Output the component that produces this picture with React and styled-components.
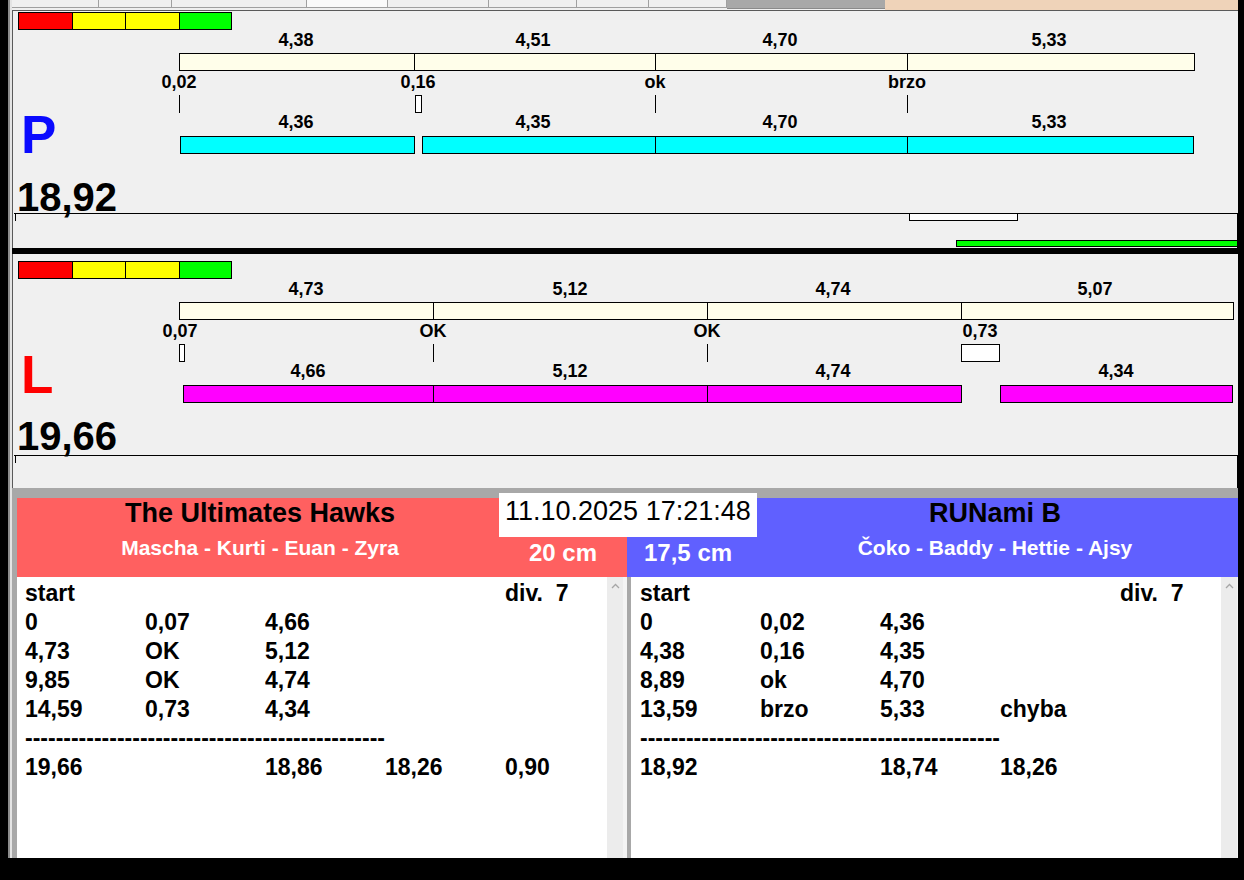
import React from 'react';
import styled, { createGlobalStyle } from 'styled-components';

const GlobalStyle = createGlobalStyle`
  html, body { margin: 0; padding: 0; background: #000; }
  body { font-family: "Liberation Sans", Arial, sans-serif; }
  * { box-sizing: border-box; }
`;

const ORIGIN = 179; // timeline x origin on the page
const BOX_ORIGIN = 14;

const Frame = styled.div`
  width: 1244px;
  height: 880px;
  padding: 0 6px 22px 8px;
  background: #000;
  overflow: hidden;
`;

const Window = styled.div`
  height: 858px;
  display: flex;
  flex-direction: column;
  border-left: 2px solid #8c8c8c;
  padding-left: 2px;
  background: #e4e4e4;
  overflow: hidden;
`;

const TabStrip = styled.div`
  height: 10px;
  display: flex;
  background: #f0f0f0;
`;

const Tab = styled.div`
  width: ${p => p.$w}px;
  height: 8px;
  background: ${p => (p.$active ? '#fafafa' : '#f0f0f0')};
  border-right: 1px solid #a0a0a0;
  border-bottom: 1px solid #a0a0a0;
`;

const TabFill = styled.div`
  width: 158px;
  height: 9px;
  background: #a8a8a8;
  border-bottom: 1px solid #8a8a8a;
`;

const TabPeach = styled.div`
  flex: 1;
  height: 10px;
  background: #efd3b9;
`;

const Panel = styled.section`
  height: ${p => p.$h}px;
  background: #f0f0f0;
  border-left: 1px solid #5a5a5a;
  border-top: ${p => (p.$top ? '1px solid #5a5a5a' : 'none')};
  display: flex;
  flex-direction: column;
`;

const PanelSeparator = styled.div`
  height: 6px;
  background: #000;
`;

const GrayBand = styled.div`
  height: 10px;
  background: #a8a8a8;
`;

const Indicator = styled.div`
  margin: ${p => p.$mt}px 0 0 5px;
  width: 214px;
  height: 18px;
  display: grid;
  grid-template-columns: 53px 52px 53px 1fr;
  gap: 1px;
  background: #000;
  border: 1px solid #000;
`;

const IndicatorCell = styled.div`
  background: ${p => p.$c};
`;

const Body = styled.div`
  height: 124px;
  display: grid;
  grid-template-columns: 166px 1fr;
`;

const Letter = styled.div`
  font-size: 53px;
  font-weight: 700;
  line-height: 52px;
  padding: ${p => p.$pt}px 0 0 8px;
  color: ${p => p.$c};
`;

const Timeline = styled.div`
  display: flex;
  flex-direction: column;
  min-width: 0;
`;

const Row = styled.div`
  position: relative;
  height: ${p => p.$h}px;
`;

const ValueText = styled.span`
  position: absolute;
  top: ${p => p.$top || 0}px;
  transform: translateX(-50%);
  font-size: 18px;
  font-weight: 700;
  line-height: 20px;
  color: #000;
  white-space: nowrap;
`;

const Segment = styled.div`
  position: absolute;
  top: 0;
  height: 18px;
  border: 1px solid #000;
  background: ${p => p.$c};
`;

const TickLine = styled.div`
  position: absolute;
  top: 0;
  width: 1px;
  height: 18px;
  background: #000;
`;

const TickBox = styled.div`
  position: absolute;
  top: 0;
  height: 18px;
  border: 1px solid #000;
  background: #fff;
`;

const Total = styled.div`
  height: 32px;
  margin-top: ${p => p.$mt}px;
  margin-bottom: ${p => p.$mb || 0}px;
  padding-left: 4px;
  font-size: 40px;
  font-weight: 700;
  line-height: 32px;
  color: #000;
`;

const FaultBox = styled.div`
  position: relative;
  flex: 1;
  margin-left: 1px;
  border-top: 1px solid #000;
  border-right: 1px solid #000;
`;

const FaultTick = styled.div`
  position: absolute;
  left: 1px;
  top: 0;
  width: 1px;
  height: 7px;
  background: #000;
`;

const FaultMark = styled.div`
  position: absolute;
  height: ${p => p.$h}px;
  border: 1px solid #000;
  background: ${p => p.$c};
`;

const Lower = styled.div`
  position: relative;
  height: 360px;
  display: grid;
  grid-template-columns: 610px minmax(0, 1fr);
  padding-left: 5px;
  background: #a8a8a8;
`;

const TeamColumn = styled.div`
  display: flex;
  flex-direction: column;
  min-width: 0;
`;

const Header = styled.div`
  height: 79px;
  display: grid;
  grid-template-columns: ${p => (p.$side === 'left' ? '486px minmax(0, 1fr)' : '125px minmax(0, 1fr)')};
  background: ${p => p.$bg};
`;

const TitleBlock = styled.div`
  display: flex;
  flex-direction: column;
  align-items: center;
  min-width: 0;
`;

const TeamName = styled.div`
  font-size: 27px;
  font-weight: 700;
  line-height: 30px;
  color: #000;
  white-space: nowrap;
`;

const Members = styled.div`
  margin-top: 8px;
  font-size: 21px;
  font-weight: 700;
  line-height: 24px;
  color: #fff;
  white-space: nowrap;
`;

const Distance = styled.div`
  padding: 41px 0 0 ${p => p.$pl}px;
  font-size: 24px;
  font-weight: 700;
  line-height: 28px;
  color: #fff;
  white-space: nowrap;
`;

const DateBox = styled.div`
  position: absolute;
  left: 487px;
  top: -5px;
  width: 258px;
  height: 44px;
  padding: 0 0 8px 6px;
  background: #fff;
  font-size: 27px;
  line-height: 36px;
  color: #000;
  white-space: nowrap;
`;

const Pane = styled.div`
  flex: 1;
  display: flex;
  min-width: 0;
  background: #f4f4f4;
  border-left: ${p => (p.$divider ? '4px solid #a8a8a8' : 'none')};
  padding-right: ${p => p.$pr}px;
`;

const List = styled.div`
  flex: 1;
  min-width: 0;
  overflow: hidden;
  background: #fff;
  padding: 2px 0 0 ${p => p.$pl}px;
`;

const ListRow = styled.div`
  display: grid;
  grid-template-columns: repeat(5, 120px);
  height: 29px;
  font-size: 23px;
  font-weight: 700;
  line-height: 29px;
  color: #000;
  white-space: pre;
`;

const DashCell = styled.span`
  grid-column: 1 / -1;
  overflow: hidden;
`;

const Scrollbar = styled.div`
  flex: none;
  width: 16px;
  background: #ececec;
  display: flex;
  justify-content: center;
  align-items: flex-start;
  padding-top: 6px;
`;

const P_DATA = {
  top: [['4,38', 296], ['4,51', 533], ['4,70', 780], ['5,33', 1049]],
  bar1: [[179, 414], [414, 655], [655, 907], [907, 1194]],
  labels: [['0,02', 179], ['0,16', 418], ['ok', 655], ['brzo', 907]],
  ticks: [{ x: 179 }, { x: 415, w: 7 }, { x: 655 }, { x: 907 }],
  bottom: [['4,36', 296], ['4,35', 533], ['4,70', 780], ['5,33', 1049]],
  bar2: [[180, 414], [422, 655], [655, 907], [907, 1193]],
};

const L_DATA = {
  top: [['4,73', 306], ['5,12', 570], ['4,74', 833], ['5,07', 1095]],
  bar1: [[179, 433], [433, 707], [707, 961], [961, 1233]],
  labels: [['0,07', 180], ['OK', 433], ['OK', 707], ['0,73', 980]],
  ticks: [{ x: 179, w: 6 }, { x: 433 }, { x: 707 }, { x: 961, w: 39 }],
  bottom: [['4,66', 308], ['5,12', 570], ['4,74', 833], ['4,34', 1116]],
  bar2: [[183, 433], [433, 707], [707, 961], [1000, 1232]],
};

const Values = ({ items, top }) =>
  items.map(([t, x], i) => (
    <ValueText key={i} $top={top} style={{ left: x - ORIGIN }}>{t}</ValueText>
  ));

const Bars = ({ segs, color }) =>
  segs.map(([a, b], i) => (
    <Segment key={i} $c={color} style={{ left: a - ORIGIN, width: b - a + 1 }} />
  ));

const Ticks = ({ items }) =>
  items.map((t, i) =>
    t.w ? (
      <TickBox key={i} style={{ left: t.x - ORIGIN, width: t.w }} />
    ) : (
      <TickLine key={i} style={{ left: t.x - ORIGIN }} />
    )
  );

const TrackPanel = ({ h, top, indMt, letter, letterColor, letterPt, data, barColor, total, totalMt, totalMb, marks }) => (
  <Panel $h={h} $top={top}>
    <Indicator $mt={indMt}>
      <IndicatorCell $c="#ff0000" />
      <IndicatorCell $c="#ffff00" />
      <IndicatorCell $c="#ffff00" />
      <IndicatorCell $c="#00ff00" />
    </Indicator>
    <Body>
      <Letter $c={letterColor} $pt={letterPt}>{letter}</Letter>
      <Timeline>
        <Row $h={23}><Values items={data.top} /></Row>
        <Row $h={18}><Bars segs={data.bar1} color="#fffeea" /></Row>
        <Row $h={24}><Values items={data.labels} top={1} /></Row>
        <Row $h={18}><Ticks items={data.ticks} /></Row>
        <Row $h={23}><Values items={data.bottom} top={-1} /></Row>
        <Row $h={18}><Bars segs={data.bar2} color={barColor} /></Row>
      </Timeline>
    </Body>
    <Total $mt={totalMt} $mb={totalMb}>{total}</Total>
    <FaultBox>
      <FaultTick />
      {marks.map((m, i) => (
        <FaultMark
          key={i}
          $c={m.c}
          $h={m.h}
          style={{ left: m.a - BOX_ORIGIN, width: m.b - m.a + 1, top: m.y }}
        />
      ))}
    </FaultBox>
  </Panel>
);

const DASHES = '-'.repeat(47);

const LEFT_ROWS = [
  ['start', '', '', '', 'div.  7'],
  ['0', '0,07', '4,66', '', ''],
  ['4,73', 'OK', '5,12', '', ''],
  ['9,85', 'OK', '4,74', '', ''],
  ['14,59', '0,73', '4,34', '', ''],
  null,
  ['19,66', '', '18,86', '18,26', '0,90'],
];

const RIGHT_ROWS = [
  ['start', '', '', '', 'div.  7'],
  ['0', '0,02', '4,36', '', ''],
  ['4,38', '0,16', '4,35', '', ''],
  ['8,89', 'ok', '4,70', '', ''],
  ['13,59', 'brzo', '5,33', 'chyba', ''],
  null,
  ['18,92', '', '18,74', '18,26', ''],
];

const UpArrow = () => (
  <svg width="9" height="6" viewBox="0 0 9 6">
    <path d="M1 5 L4.5 1.5 L8 5" fill="none" stroke="#a6a6a6" strokeWidth="1.3" />
  </svg>
);

const ResultList = ({ rows, pl }) => (
  <List $pl={pl}>
    {rows.map((r, i) => (
      <ListRow key={i}>
        {r ? r.map((c, j) => <span key={j}>{c}</span>) : <DashCell>{DASHES}</DashCell>}
      </ListRow>
    ))}
  </List>
);

const TABS = [87, 73, 135, 81, 101, 88, 72, 78];

export default function App() {
  return (
    <Frame>
      <GlobalStyle />
      <Window>
        <TabStrip>
          {TABS.map((w, i) => <Tab key={i} $w={w} $active={i === 3} />)}
          <TabFill />
          <TabPeach />
        </TabStrip>

        <TrackPanel
          h={238}
          top
          indMt={1}
          letter="P"
          letterColor="#0a0aff"
          letterPt={79}
          data={P_DATA}
          barColor="#00ffff"
          total="18,92"
          totalMt={27}
          marks={[
            { a: 909, b: 1017, y: -1, h: 8, c: '#fff' },
            { a: 956, b: 1237, y: 26, h: 7, c: '#00ff00' },
          ]}
        />
        <PanelSeparator />
        <TrackPanel
          h={234}
          indMt={7}
          letter="L"
          letterColor="#ff0000"
          letterPt={70}
          data={L_DATA}
          barColor="#ff00ff"
          total="19,66"
          totalMt={17}
          totalMb={3}
          marks={[]}
        />
        <GrayBand />

        <Lower>
          <TeamColumn>
            <Header $side="left" $bg="#ff6060">
              <TitleBlock>
                <TeamName>The Ultimates Hawks</TeamName>
                <Members>Mascha - Kurti - Euan - Zyra</Members>
              </TitleBlock>
              <Distance $pl={26}>20 cm</Distance>
            </Header>
            <Pane $pr={4}>
              <ResultList rows={LEFT_ROWS} pl={8} />
              <Scrollbar><UpArrow /></Scrollbar>
            </Pane>
          </TeamColumn>
          <TeamColumn>
            <Header $side="right" $bg="#6060ff">
              <Distance $pl={17}>17,5 cm</Distance>
              <TitleBlock>
                <TeamName>RUNami B</TeamName>
                <Members>Čoko - Baddy - Hettie - Ajsy</Members>
              </TitleBlock>
            </Header>
            <Pane $divider $pr={1}>
              <ResultList rows={RIGHT_ROWS} pl={9} />
              <Scrollbar><UpArrow /></Scrollbar>
            </Pane>
          </TeamColumn>
          <DateBox>11.10.2025 17:21:48</DateBox>
        </Lower>
      </Window>
    </Frame>
  );
}
